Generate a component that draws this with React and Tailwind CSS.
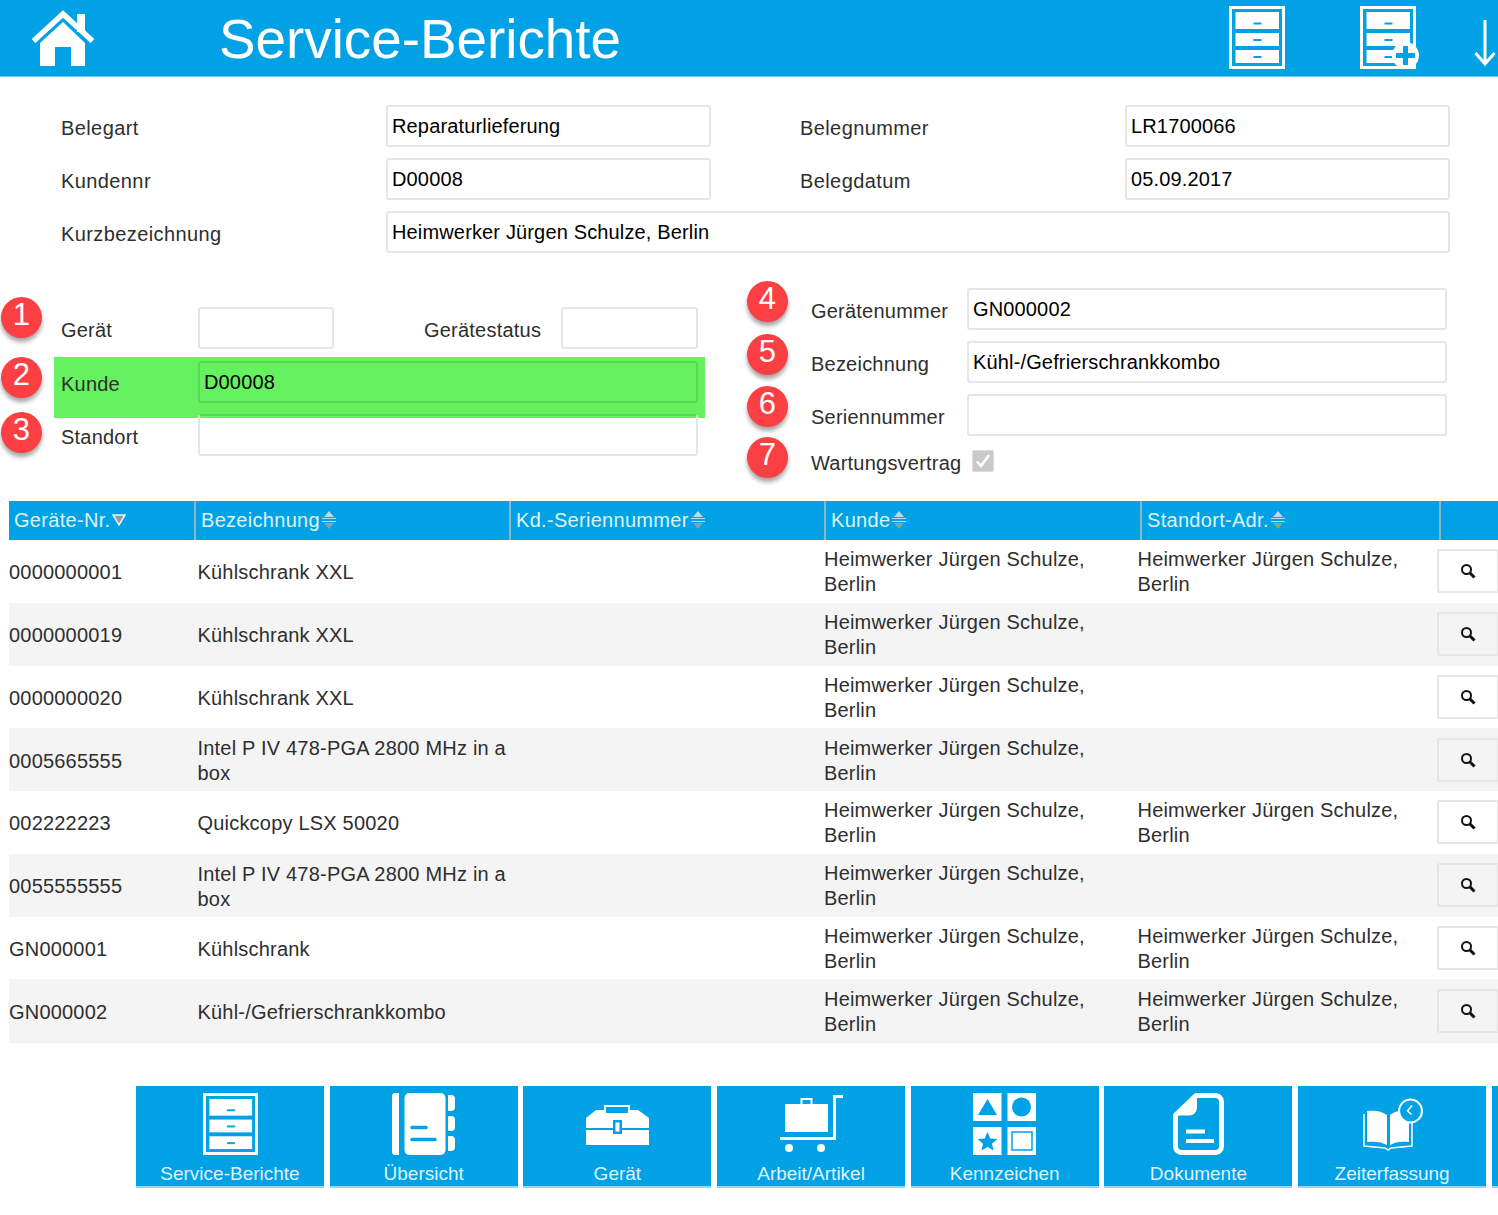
import React from 'react';

const BLUE = '#00a2e5';

const rows = [
    { nr: '0000000001', name: 'Kühlschrank XXL', adr: true },
    { nr: '0000000019', name: 'Kühlschrank XXL' },
    { nr: '0000000020', name: 'Kühlschrank XXL' },
    { nr: '0005665555', name: 'Intel P IV 478-PGA 2800 MHz in a box' },
    { nr: '002222223', name: 'Quickcopy LSX 50020', adr: true },
    { nr: '0055555555', name: 'Intel P IV 478-PGA 2800 MHz in a box' },
    { nr: 'GN000001', name: 'Kühlschrank', adr: true },
    { nr: 'GN000002', name: 'Kühl-/Gefrierschrankkombo', adr: true },
];

const HomeIcon = () => (
    <svg width="64" height="56" viewBox="0 0 64 56" className="shrink-0">
        <path d="M46 4h8v18h-8z" fill="#fff" />
        <path d="M2.500 31 32 4l29.500 27" fill="none" stroke="#fff" strokeWidth="5.500" />
        <path d="M9 33 32 12l22 21v23H40V37H24v19H9z" fill="#fff" />
    </svg>
);

const CabinetIcon = ({ width = 56, height = 63 }) => (
    <svg width={width} height={height} viewBox="0 0 56 63" className="shrink-0">
        <rect x="1.500" y="1.500" width="53" height="60" fill="none" stroke="#fff" strokeWidth="3" />
        <rect x="6.500" y="6" width="43.500" height="17" fill="#fff" />
        <rect x="6.500" y="27" width="43.500" height="13" fill="#fff" />
        <rect x="6.500" y="44" width="43.500" height="13" fill="#fff" />
        <rect x="24.500" y="16.500" width="8" height="2" fill={BLUE} />
        <rect x="24.500" y="33" width="8" height="2" fill={BLUE} />
        <rect x="24.500" y="50" width="8" height="2" fill={BLUE} />
    </svg>
);

const NotebookIcon = () => (
    <svg width="63" height="62" viewBox="0 0 63 62">
        <path d="M7 0v62H3a3 3 0 0 1-3-3V3a3 3 0 0 1 3-3z" fill="#fff" />
        <rect x="12.500" y="0" width="41" height="62" rx="5" fill="#fff" />
        <path d="M56 2h3a4 4 0 0 1 4 4v8a4 4 0 0 1-4 4h-3zM56 23h3a4 4 0 0 1 4 4v7a4 4 0 0 1-4 4h-3zM56 43h3a4 4 0 0 1 4 4v7a4 4 0 0 1-4 4h-3z" fill="#fff" />
        <path d="M20 34.500h14M20 46.500h23" stroke={BLUE} strokeWidth="3.500" strokeLinecap="round" />
    </svg>
);

const ToolboxIcon = () => (
    <svg width="63" height="41" viewBox="0 0 63 41">
        <path d="M19 12V2h24v10" fill="none" stroke="#fff" strokeWidth="2" />
        <path d="M0 14 10 6h9v3h24V6h9l11 8v10H0z" fill="#fff" />
        <rect y="26" width="63" height="15" fill="#fff" />
        <rect x="27" y="16" width="9" height="14" fill={BLUE} />
        <rect x="29.500" y="18.500" width="4" height="9" fill="#fff" />
    </svg>
);

const CartIcon = () => (
    <svg width="63" height="58" viewBox="0 0 63 58">
        <rect x="5" y="9" width="43" height="28" fill="#fff" />
        <path d="M21.500 9V4h10v5" fill="none" stroke="#fff" strokeWidth="2" />
        <path d="M63 1.500H54.500V43.500H0" fill="none" stroke="#fff" strokeWidth="3" />
        <circle cx="9" cy="53" r="4" fill="#fff" />
        <circle cx="41" cy="53" r="4" fill="#fff" />
    </svg>
);

const ShapesIcon = () => (
    <svg width="63" height="62" viewBox="0 0 63 62">
        <rect width="28.500" height="28" fill="#fff" />
        <rect x="34.500" width="28.500" height="28" fill="#fff" />
        <rect y="34" width="28.500" height="28" fill="#fff" />
        <rect x="34.500" y="34" width="28.500" height="28" fill="#fff" />
        <path d="M14.500 6 24 22H5z" fill={BLUE} />
        <circle cx="48.500" cy="14" r="9.500" fill={BLUE} />
        <path d="m14.500 39 2.800 6.500 7 .6-5.300 4.600 1.600 6.800-6.100-3.600-6.100 3.600 1.600-6.800-5.300-4.600 7-.6z" fill={BLUE} />
        <rect x="39" y="39" width="20" height="18" fill="none" stroke={BLUE} strokeWidth="1.500" />
    </svg>
);

const DocumentIcon = () => (
    <svg width="51" height="62" viewBox="0 0 51 62">
        <path d="M23 2.500h19a6 6 0 0 1 6.500 6v45a6 6 0 0 1-6.500 6H9a6 6 0 0 1-6.500-6V22z" fill="none" stroke="#fff" strokeWidth="5" strokeLinejoin="round" />
        <path d="M23 1 1 22.500h15a8 8 0 0 0 8-8V1z" fill="#fff" />
        <path d="M13 38.500h19M13 48h28" stroke="#fff" strokeWidth="4" />
    </svg>
);

const BookClockIcon = () => (
    <svg width="61" height="53" viewBox="0 0 61 53">
        <path d="M2 16v32l21 2 3 2 3-2 21-2V16" fill="none" stroke="#fff" strokeWidth="1.500" />
        <path d="M5 13c8-1 15 0 20 4v30c-5-3-12-4-20-3zM28 17c4-4 11-5 19-4v31c-8-1-14 0-19 3z" fill="#fff" />
        <circle cx="48.500" cy="13" r="11.500" fill={BLUE} stroke="#fff" strokeWidth="2" />
        <path d="M50 7.500 45.500 13l4 3.500" fill="none" stroke="#fff" strokeWidth="1.500" />
    </svg>
);

const SearchIcon = () => (
    <svg width="16" height="16" viewBox="0 0 16 16">
        <circle cx="6.500" cy="6.500" r="4.500" fill="none" stroke="#111" strokeWidth="2" />
        <path d="m10 10 4.500 4.500" stroke="#111" strokeWidth="3" />
    </svg>
);

const SortIcon = () => (
    <svg width="14" height="18" viewBox="0 0 14 18" className="shrink-0">
        <path d="M7 0 12 6H2z" fill="#bcdcea" />
        <path d="M0 7.500h14M0 10.500h14" stroke="#bcdcea" strokeWidth="1" />
        <path d="M7 18 2 12h10z" fill="#8d9ea8" />
    </svg>
);

const SortedIcon = () => (
    <svg width="14" height="12" viewBox="0 0 14 12" className="shrink-0">
        <path d="M1 1h12L7 11z" fill="#8d9ea8" stroke="#e9f6fc" strokeWidth="1.500" />
    </svg>
);

const Field = ({ children, className = '' }) => (
    <div className={`h-[42px] flex items-center px-[4px] rounded-[3px] border-2 text-[20px] tracking-[0.15px] text-black whitespace-nowrap ${className}`}>
        {children}
    </div>
);

const Label = ({ children, className = '' }) => (
    <div className={`pt-[3px] text-[20px] text-[#2e2e2e] whitespace-nowrap ${className}`}>{children}</div>
);

const Badge = ({ children, className = '' }) => (
    <div className={`absolute z-20 w-[41px] h-[41px] rounded-full bg-[#fb3f43] shadow-[0_4px_4px_rgba(0,0,0,0.35)] flex items-center justify-center pb-[4px] text-[31px] text-white ${className}`}>
        {children}
    </div>
);

const HeadCell = ({ children, icon }) => (
    <div className="flex items-center gap-[2px] pl-[5px] pb-[1px] h-full border-r-2 border-[#8fb4c6]">
        <span>{children}</span>
        {icon}
    </div>
);

const Tile = ({ icon, label }) => (
    <div className="w-[188px] h-[102px] shrink-0 bg-[#00a2e5] border-b-2 border-[#8fd9f7] flex flex-col items-center text-[#dff4fd]">
        <div className="h-[80px] flex items-center justify-center">{icon}</div>
        <div className="text-[19px] leading-[24px]">{label}</div>
    </div>
);

const App = () => {
    return (
        <div className="relative w-[1498px] h-[1215px] overflow-hidden bg-white font-['Liberation_Sans',Arial,sans-serif]">
            {/* Header */}
            <header className="h-[77px] bg-[#00a2e5] border-b border-[#70cdf2] flex items-center">
                <div className="ml-[31px]"><HomeIcon /></div>
                <h1 className="ml-[124px] mt-[3px] w-[402px] text-[54.800px] text-white font-normal whitespace-nowrap">Service-Berichte</h1>
                <div className="ml-[608px] mt-[-1px]"><CabinetIcon /></div>
                <div className="ml-[75px] mt-[-1px] relative">
                    <CabinetIcon />
                    <div className="absolute right-[-3px] bottom-[0px] w-[27px] h-[27px] rounded-full bg-white flex items-center justify-center">
                        <svg width="19" height="19" viewBox="0 0 19 19">
                            <path d="M9.500 1v17M1 9.500h17" stroke="#00a2e5" strokeWidth="5" strokeLinecap="round" />
                        </svg>
                    </div>
                </div>
                <svg width="22" height="46" viewBox="0 0 22 46" className="ml-[58px] mt-[9px] shrink-0">
                    <path d="M11 0v44M1.500 33 11 44l9.500-11" fill="none" stroke="#fff" strokeWidth="3" />
                </svg>
            </header>

            {/* Belegkopf */}
            <section className="ml-[61px] mt-[28px] w-[1389px] flex flex-col gap-[11px] tracking-[0.4px]">
                <div className="flex items-center">
                    <Label className="w-[325px]">Belegart</Label>
                    <Field className="w-[325px] border-[#e6e6e6]">Reparaturlieferung</Field>
                    <Label className="ml-[89px] w-[325px]">Belegnummer</Label>
                    <Field className="flex-1 border-[#e6e6e6]">LR1700066</Field>
                </div>
                <div className="flex items-center">
                    <Label className="w-[325px]">Kundennr</Label>
                    <Field className="w-[325px] border-[#e6e6e6]">D00008</Field>
                    <Label className="ml-[89px] w-[325px]">Belegdatum</Label>
                    <Field className="flex-1 border-[#e6e6e6]">05.09.2017</Field>
                </div>
                <div className="flex items-center">
                    <Label className="w-[325px]">Kurzbezeichnung</Label>
                    <Field className="flex-1 border-[#e6e6e6]">Heimwerker Jürgen Schulze, Berlin</Field>
                </div>
            </section>

            {/* Geraet */}
            <section className="relative mt-[35px] h-[213px] flex tracking-[0.22px]">
                <Badge className="left-[1px] top-[9px]">1</Badge>
                <Badge className="left-[1px] top-[69px]">2</Badge>
                <Badge className="left-[1px] top-[124px]">3</Badge>
                <Badge className="left-[747px] top-[-7px]">4</Badge>
                <Badge className="left-[747px] top-[46px]">5</Badge>
                <Badge className="left-[747px] top-[98px]">6</Badge>
                <Badge className="left-[747px] top-[149px]">7</Badge>

                <div className="ml-[54px] mt-[19px] w-[651px]">
                    <div className="flex items-center pl-[7px]">
                        <Label className="w-[137px]">Gerät</Label>
                        <Field className="w-[136px] border-[#e6e6e6]" />
                        <Label className="ml-[90px] w-[137px]">Gerätestatus</Label>
                        <Field className="w-[137px] border-[#e6e6e6]" />
                    </div>
                    <div className="mt-[8px] h-[61px] pt-[4px] bg-[#66f160] flex items-start pl-[7px]">
                        <Label className="w-[137px] pt-[8px]">Kunde</Label>
                        <Field className="w-[500px] border-[#5ad955]">D00008</Field>
                    </div>
                    <div className="relative mt-[-4px] flex items-center pl-[7px]">
                        <Label className="w-[137px]">Standort</Label>
                        <Field className="w-[500px] border-[#e6e6e6] border-t-[#5ad955]" />
                    </div>
                </div>

                <div className="ml-[106px] w-[636px] flex flex-col gap-[11px]">
                    <div className="flex items-center">
                        <Label className="w-[156px]">Gerätenummer</Label>
                        <Field className="w-[480px] border-[#e6e6e6]">GN000002</Field>
                    </div>
                    <div className="flex items-center">
                        <Label className="w-[156px]">Bezeichnung</Label>
                        <Field className="w-[480px] border-[#e6e6e6]">Kühl-/Gefrierschrankkombo</Field>
                    </div>
                    <div className="flex items-center">
                        <Label className="w-[156px]">Seriennummer</Label>
                        <Field className="w-[480px] border-[#e6e6e6]" />
                    </div>
                    <div className="flex items-center h-[30px] mt-[-1px]">
                        <Label className="w-[161px]">Wartungsvertrag</Label>
                        <div className="w-[22px] h-[22px] rounded-[2px] bg-[#c9c9c9] border border-[#dcdcdc] flex items-center justify-center">
                            <svg width="16" height="16" viewBox="0 0 16 16">
                                <path d="m2 8.500 4 4.500 8-11" fill="none" stroke="#fff" strokeWidth="2.500" />
                            </svg>
                        </div>
                    </div>
                </div>
            </section>

            {/* Tabelle */}
            <div className="ml-[9px] h-[39px] bg-[#00a2e5] grid grid-cols-[187px_315px_315px_316px_299px_1fr] items-center text-[20px] tracking-[0.3px] text-[#dff4fd]">
                <HeadCell icon={<SortedIcon />}>Geräte-Nr.</HeadCell>
                <HeadCell icon={<SortIcon />}>Bezeichnung</HeadCell>
                <HeadCell icon={<SortIcon />}>Kd.-Seriennummer</HeadCell>
                <HeadCell icon={<SortIcon />}>Kunde</HeadCell>
                <HeadCell icon={<SortIcon />}>Standort-Adr.</HeadCell>
                <div />
            </div>
            <div className="ml-[9px] border-b border-[#eeeeee]">
                {rows.map((row, i) => (
                    <div
                        key={row.nr}
                        className={`h-[62.75px] grid grid-cols-[188.5px_626.500px_313.500px_299.500px_1fr] items-center text-[20px] leading-[25px] tracking-[0.2px] text-[#2e2e2e] ${i % 2 === 1 ? 'bg-[#f4f4f4]' : 'bg-white'}`}
                    >
                        <div className="pt-[3px]">{row.nr}</div>
                        <div className="pt-[3px] pr-[315px]">{row.name}</div>
                        <div className="pt-[2px] pr-[30px]">Heimwerker Jürgen Schulze, Berlin</div>
                        <div className="pt-[2px] pr-[30px]">{row.adr && 'Heimwerker Jürgen Schulze, Berlin'}</div>
                        <div className="w-[62px] h-[44px] border-2 border-[#e6e6e6] rounded-[2px] flex items-center justify-center">
                            <SearchIcon />
                        </div>
                    </div>
                ))}
            </div>

            {/* Navigation */}
            <nav className="ml-[136px] mt-[43px] flex gap-[5.7px]">
                <Tile icon={<CabinetIcon width={55} height={62} />} label="Service-Berichte" />
                <Tile icon={<NotebookIcon />} label="Übersicht" />
                <Tile icon={<ToolboxIcon />} label="Gerät" />
                <Tile icon={<CartIcon />} label="Arbeit/Artikel" />
                <Tile icon={<ShapesIcon />} label="Kennzeichen" />
                <Tile icon={<DocumentIcon />} label="Dokumente" />
                <Tile icon={<BookClockIcon />} label="Zeiterfassung" />
                <Tile label="" />
            </nav>
        </div>
    );
};

export default App;
